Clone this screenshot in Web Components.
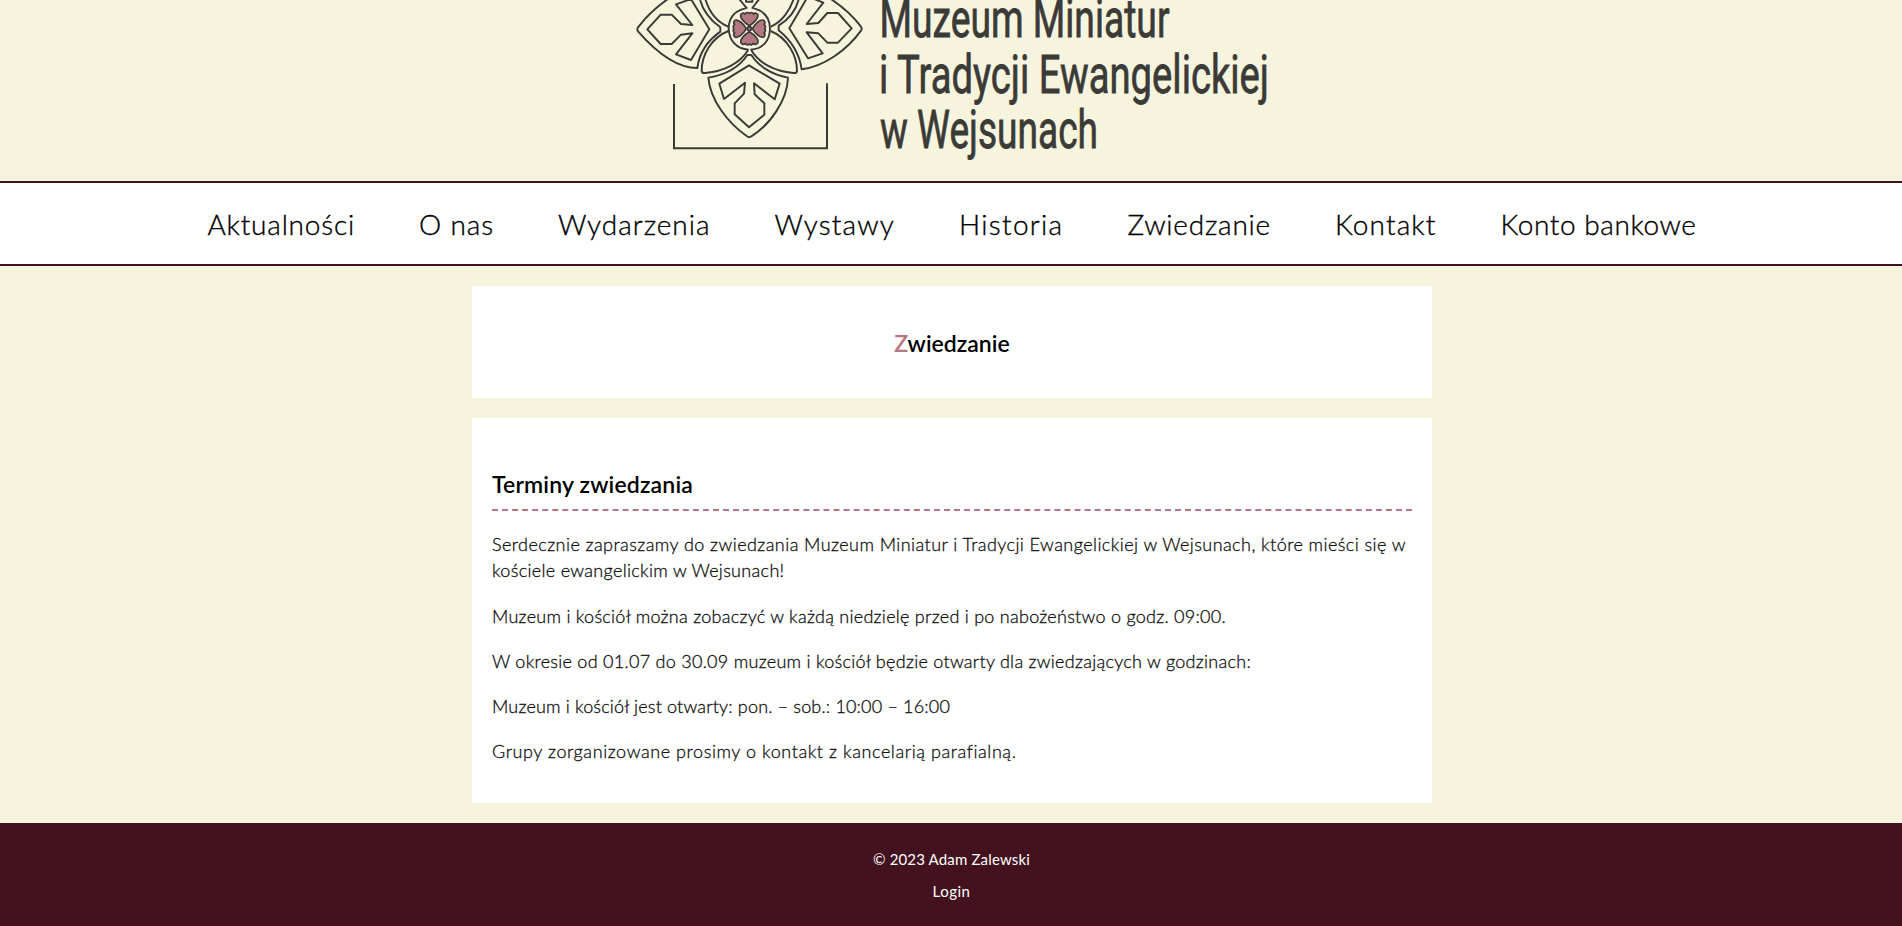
<!DOCTYPE html>
<html lang="pl">
<head>
<meta charset="utf-8">
<title>Muzeum Miniatur i Tradycji Ewangelickiej w Wejsunach</title>
<style>
  html, body { margin: 0; }
  body { font-family: Lato, "Open Sans", sans-serif; background: #f7f4de; color: #000; height: 926px; overflow: hidden; }
</style>
</head>
<body>
<museum-page></museum-page>
<script>
const define = (name, html, setup) => customElements.define(name, class extends HTMLElement {
  constructor() {
    super();
    this.attachShadow({ mode: 'open' }).innerHTML = html;
  }
  connectedCallback() { if (setup) setup(this); }
});

/* One line of text tracked so that it fills the width given in "w". */
define('fit-text', `
  <style>
    :host { display: inline-block; white-space: nowrap; }
    span { display: inline-block; white-space: nowrap; }
  </style><span><slot></slot></span>`, el => {
  const fit = () => {
    const span = el.shadowRoot.querySelector('span');
    const target = parseFloat(el.getAttribute('w'));
    span.style.letterSpacing = '0px';
    const natural = span.getBoundingClientRect().width;
    span.style.letterSpacing = (target - natural) / el.textContent.length + 'px';
    el.style.width = target + 'px';
  };
  requestAnimationFrame(fit);
  addEventListener('load', fit);
});

define('museum-logo', `
  <style>
    :host { display: flex; justify-content: center; height: 181px; overflow: hidden; }
    svg { display: block; }
    text { font-family: Roboto, sans-serif; font-size: 53.4px; font-weight: 400; fill: #3a3a37; stroke: #3a3a37; stroke-width: .8px; }
  </style>
  <svg width="662" height="181" viewBox="0 0 662 181">
    <g transform="scale(.33333)" fill="none" stroke="#3a3a37" stroke-width="5.8" stroke-linejoin="round">
      <path d="M162 252V445H621V250" stroke-width="6" stroke-linejoin="miter"/>
      <!-- left shield -->
      <path d="M148 -6Q92 32 54 82Q50 88 54 94C110 158 170 204 232 204C238 160 262 122 301 95V82C268 58 246 28 239 -6"/>
      <path d="M211 -6L268 88L213 180L168 163L217 100L183 104L155 132H122L82 88L122 44H155L183 72L217 75L168 13L216 -4"/>
      <!-- right shield -->
      <path d="M628 -6Q687 32 723 80Q727 86 723 92C680 152 610 200 545 208C538 160 514 122 476 91V77C506 58 530 28 537 -6"/>
      <path d="M561 -6L508 85L564 175L608 160L560 97L595 100L622 128H654L695 85L654 39H622L595 69L560 72L610 8L570 -8"/>
      <!-- bottom shield -->
      <path d="M265 233C320 224 360 198 382 165H394C415 198 455 224 504 233C502 300 450 375 394 409Q388 414 381 409C325 370 270 300 265 233Z"/>
      <path d="M387 196L479 251L464 298L402 250L404 283L433 310V344L387 382L344 343V310L372 281L375 248L312 297L298 251Z"/>
      <path d="M378 -4V5H397V-4"/>
      <!-- leaves between the shields -->
      <path d="M325 93C274 113 245 165 245 213Q246 220 256 219C312 214 360 190 384 151"/>
      <path d="M452 93C501 113 531 165 531 213Q530 220 520 219C464 214 417 190 394 151"/>
      <path d="M255 -6C266 32 290 66 325 80M522 -6C510 32 485 66 452 80M355 -6L380 24M420 -6L397 24"/>
      <path d="M373 26C343 34 326 56 326 87C328 122 349 147 386 149M404 26C433 34 450 56 450 87C449 122 429 147 391 149M373 26L382 23M404 26L395 23"/>
      <g fill="#b47882" stroke-width="5">
        <path id="p" d="M388 77C372 68 358 52 363 43Q369 36 376 42Q381 34 388 40Q395 34 400 42Q407 36 413 43C417 52 404 68 388 77Z"/>
        <use href="#p" transform="rotate(90 388 86)"/>
        <use href="#p" transform="rotate(180 388 86)"/>
        <use href="#p" transform="rotate(270 388 86)"/>
        <circle cx="388" cy="86" r="6"/>
      </g>
    </g>
    <text x="259.5" y="37.3" textLength="290" lengthAdjust="spacingAndGlyphs">Muzeum Miniatur</text>
    <text x="259" y="92.8" textLength="390" lengthAdjust="spacingAndGlyphs">i Tradycji Ewangelickiej</text>
    <text x="260" y="148.4" textLength="218" lengthAdjust="spacingAndGlyphs">w Wejsunach</text>
  </svg>`);

define('museum-nav', `
  <style>
    :host { display: flex; justify-content: center; align-items: center; gap: 64px; box-sizing: border-box; height: 85px;
      padding: 1px 0 0 2px; background: #fff; border-top: 2px solid #43121e; border-bottom: 2px solid #43121e;
      font-size: 28px; line-height: 34px; font-weight: 300; -webkit-text-stroke: .35px #000; }
  </style>
  <fit-text w="147.5">Aktualności</fit-text>
  <fit-text w="75">O nas</fit-text>
  <fit-text w="152.5">Wydarzenia</fit-text>
  <fit-text w="120.5">Wystawy</fit-text>
  <fit-text w="104.5">Historia</fit-text>
  <fit-text w="143.5">Zwiedzanie</fit-text>
  <fit-text w="101.5">Kontakt</fit-text>
  <fit-text w="196">Konto bankowe</fit-text>`);

define('content-card', `
  <style>:host { display: block; box-sizing: border-box; width: 960px; padding: 0 20px; background: #fff; }</style>
  <slot></slot>`);

define('page-title', `
  <style>
    :host { display: flex; justify-content: center; align-items: center; box-sizing: border-box; height: 112px; padding-top: 2px; font-size: 23px; font-weight: 600; }
    b { color: #b47882; font-weight: inherit; }
  </style><fit-text w="115.5"><b>Z</b>wiedzanie</fit-text>`);

define('section-title', `
  <style>
    :host { display: block; padding-top: 51px; height: 40px; line-height: 30px; font-size: 23px; font-weight: 600; border-bottom: 2px dashed #b47882; }
  </style><slot></slot>`);

define('text-block', `
  <style>
    :host { display: flex; flex-direction: column; gap: 19.2px; padding-top: 20.4px; font-size: 18px; line-height: 26px; color: #111;
      font-weight: 300; -webkit-text-stroke: .3px #111; }
    p { margin: 0; display: flex; flex-direction: column; align-items: flex-start; }
  </style>
  <p><fit-text w="914">Serdecznie zapraszamy do zwiedzania Muzeum Miniatur i Tradycji Ewangelickiej w Wejsunach, które mieści się w</fit-text>
     <fit-text w="292.5">kościele ewangelickim w Wejsunach!</fit-text></p>
  <p><fit-text w="734">Muzeum i kościół można zobaczyć w każdą niedzielę przed i po nabożeństwo o godz. 09:00.</fit-text></p>
  <p><fit-text w="759">W okresie od 01.07 do 30.09 muzeum i kościół będzie otwarty dla zwiedzających w godzinach:</fit-text></p>
  <p><fit-text w="458">Muzeum i kościół jest otwarty: pon. – sob.: 10:00 – 16:00</fit-text></p>
  <p><fit-text w="524">Grupy zorganizowane prosimy o kontakt z kancelarią parafialną.</fit-text></p>`);

define('museum-footer', `
  <style>
    :host { display: flex; flex-direction: column; align-items: center; gap: 12px; box-sizing: border-box; height: 103px;
      padding: 26px 0 0 1px; background: #43121e; color: #fff; font-size: 15px; line-height: 20px; }
  </style>
  <fit-text w="157">© 2023 Adam Zalewski</fit-text>
  <fit-text w="38">Login</fit-text>`);

define('museum-page', `
  <style>
    :host { display: block; }
    main { display: flex; flex-direction: column; align-items: center; gap: 20px; padding: 20px 0 20px 2px; }
    .title { height: 112px; }
    .info { height: 385px; }
  </style>
  <museum-logo></museum-logo>
  <museum-nav></museum-nav>
  <main>
    <content-card class="title"><page-title></page-title></content-card>
    <content-card class="info">
      <section-title><fit-text w="201">Terminy zwiedzania</fit-text></section-title>
      <text-block></text-block>
    </content-card>
  </main>
  <museum-footer></museum-footer>`);
</script>
</body>
</html>
